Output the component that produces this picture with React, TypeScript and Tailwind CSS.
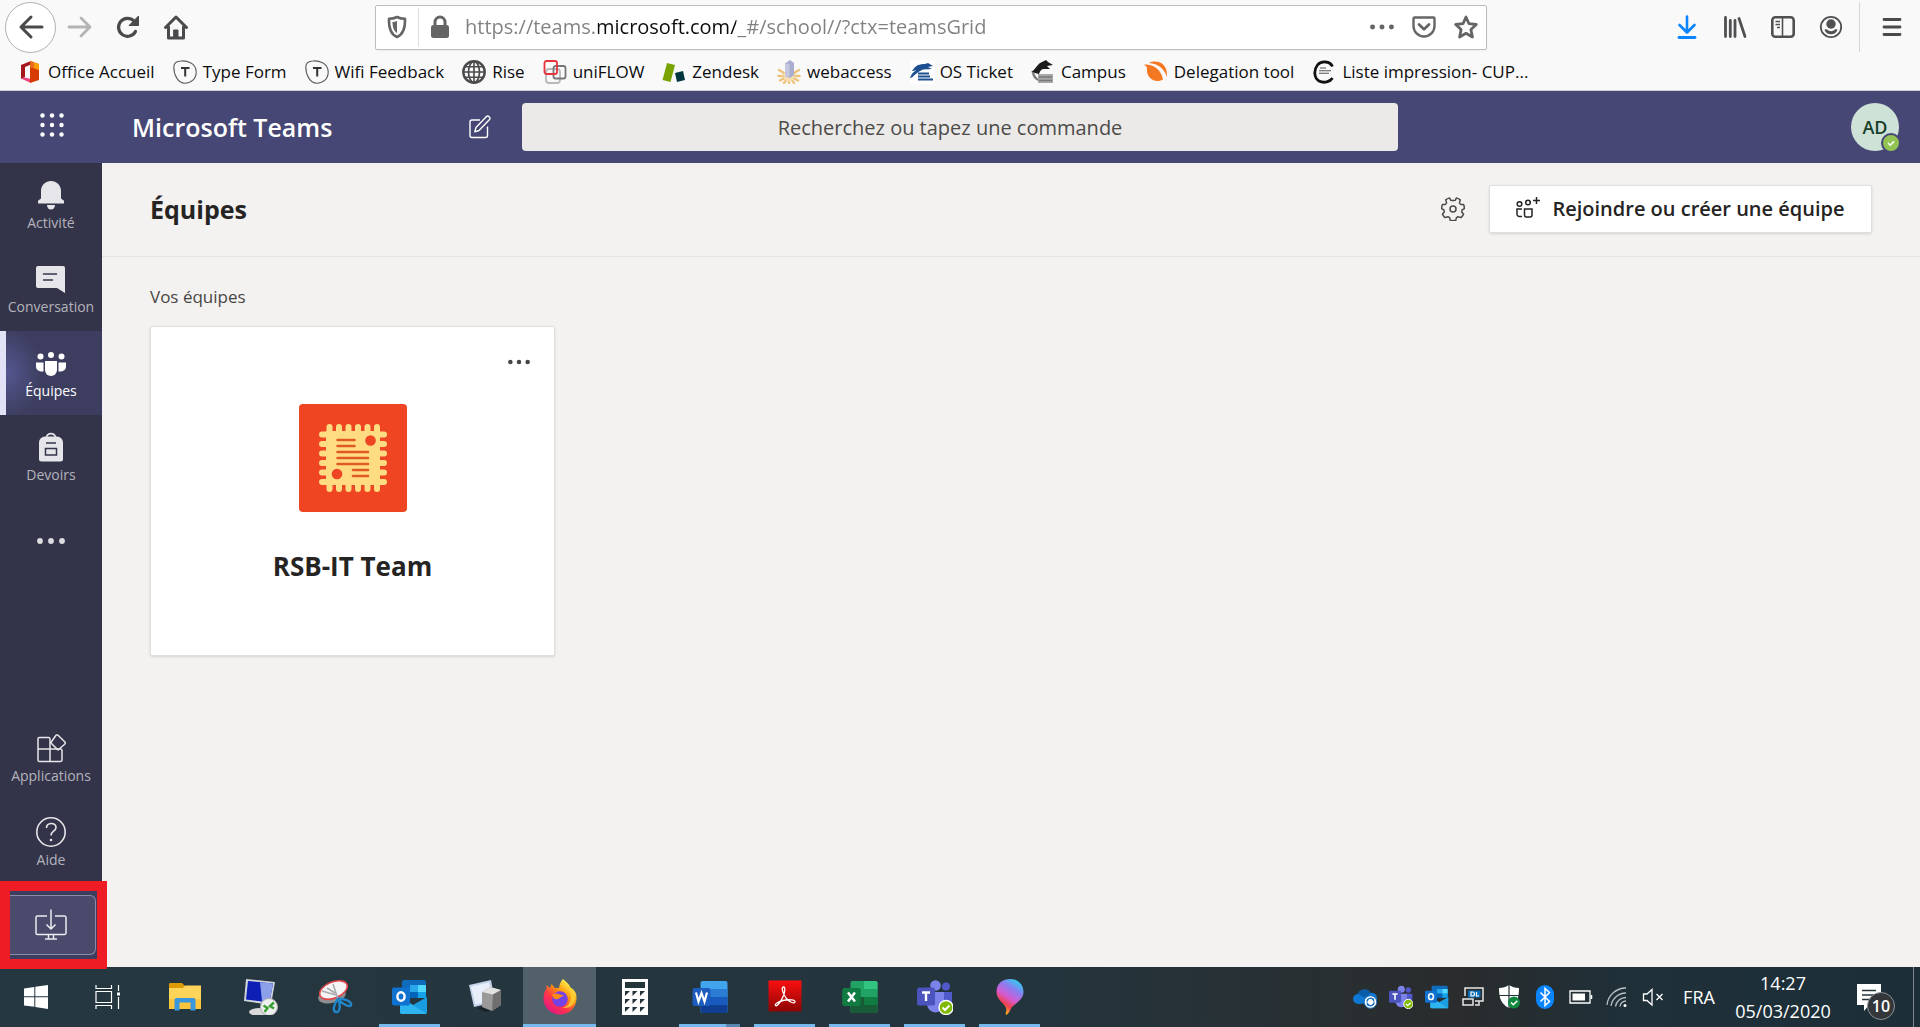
import React from 'react';

interface Bookmark {
  label: string;
  icon: React.ReactNode;
}

interface RailItemProps {
  label: string;
  icon: React.ReactNode;
  active?: boolean;
}

interface TaskbarApp {
  name: string;
  icon: React.ReactNode;
  state?: 'open' | 'active' | 'stacked';
}

/* ---------- browser icons ---------- */

const BackIcon = () => (
  <svg className="size-7" viewBox="0 0 28 28" fill="none" stroke="#4a4a4c" strokeWidth="3" strokeLinecap="round" strokeLinejoin="round">
    <path d="M25 14H4M14 4 4 14l10 10" />
  </svg>
);

const ForwardIcon = () => (
  <svg className="size-7" viewBox="0 0 28 28" fill="none" stroke="#b4b4b5" strokeWidth="2.8" strokeLinecap="round" strokeLinejoin="round">
    <path d="M3 14h21M15 5l9 9-9 9" />
  </svg>
);

const ReloadIcon = () => (
  <svg className="size-7" viewBox="0 0 28 28" fill="none">
    <path d="M21.5 18.5A9 9 0 1 1 20 8" stroke="#4a4a4c" strokeWidth="3.2" strokeLinecap="round" />
    <path d="M24.5 3v9.5H15z" fill="#4a4a4c" stroke="#4a4a4c" strokeWidth="1" strokeLinejoin="round" />
  </svg>
);

const HomeIcon = () => (
  <svg className="size-7" viewBox="0 0 28 28" fill="none" stroke="#4a4a4c" strokeWidth="3" strokeLinecap="round" strokeLinejoin="round">
    <path d="M3.500 14.500 14 4l10.500 10.500" />
    <path d="M6.500 14v11h15V14" />
    <path d="M12 17h4v7h-4z" fill="#4a4a4c" strokeWidth="1" />
  </svg>
);

const ShieldIcon = () => (
  <svg className="h-6 w-5" viewBox="0 0 20 24" fill="none">
    <path d="M10 2c3 1.500 5.500 1.700 8 1.700C18.300 12 17 19 10 22 3 19 1.700 12 2 3.700 4.500 3.700 7 3.500 10 2z" stroke="#656566" strokeWidth="2.600" strokeLinejoin="round" />
    <path d="M10 6v12c-3.500-2.500-4.400-6-4.500-11 1.500 0 3-.300 4.500-1z" fill="#656566" />
  </svg>
);

const LockIcon = () => (
  <svg className="h-6 w-5" viewBox="0 0 20 24" fill="none">
    <path d="M5 11V7a5 5 0 0 1 10 0v4" stroke="#656566" strokeWidth="3" />
    <rect x="1" y="10" width="18" height="13" rx="2.500" fill="#656566" />
  </svg>
);

const PocketIcon = () => (
  <svg className="size-6" viewBox="0 0 24 24" fill="none" stroke="#656566" strokeLinecap="round" strokeLinejoin="round">
    <path d="M2.500 2.500h19a1 1 0 0 1 1 1V11a10.500 10.500 0 0 1-21 0V3.500a1 1 0 0 1 1-1z" strokeWidth="2.400" />
    <path d="m7 9.500 5 4.800 5-4.800" strokeWidth="2.800" />
  </svg>
);

const StarIcon = () => (
  <svg className="size-6" viewBox="0 0 24 24" fill="none" stroke="#656566" strokeWidth="2.800" strokeLinejoin="round">
    <path d="m12 2 3 6.700 7.300.800-5.400 5 1.500 7.500L12 18.300 5.600 22l1.500-7.500-5.400-5L9 8.700z" />
  </svg>
);

const DownloadIcon = () => (
  <svg className="size-6" viewBox="0 0 24 24" fill="none" stroke="#0a84ff" strokeLinecap="round" strokeLinejoin="round">
    <path d="M12 1.500V17M4.500 10l7.500 7.500 7.500-7.500" strokeWidth="2.600" />
    <path d="M4 22.500h16" strokeWidth="2.800" />
  </svg>
);

const LibraryIcon = () => (
  <svg className="size-6" viewBox="0 0 24 24" fill="none" stroke="#505052" strokeWidth="2.800" strokeLinecap="round">
    <path d="M2.500 2.500v19M7.300 5.500v16M12 5.500v16M16 3.500l6 18" />
  </svg>
);

const SidebarIcon = () => (
  <svg className="size-6" viewBox="0 0 24 24" fill="none" stroke="#505052">
    <rect x="1.300" y="2.300" width="21.400" height="19.400" rx="3" strokeWidth="2.600" />
    <path d="M11.500 3v18" strokeWidth="1.600" />
    <path d="M4.500 6.500h4.500M4.500 9.500h4.500M6 12.500h3" strokeWidth="1.500" />
  </svg>
);

const AccountIcon = () => (
  <svg className="size-6" viewBox="0 0 24 24" fill="none">
    <circle cx="12" cy="12" r="10.200" stroke="#505052" strokeWidth="1.800" />
    <circle cx="12" cy="9" r="4.700" fill="#505052" />
    <path d="M5.500 14.800c1.500-.900 2.500-.400 3.500.500 2 1.200 4 1.200 6 0 1-.900 2-1.400 3.500-.500C17.500 18 15 19.300 12 19.300S6.500 18 5.500 14.800z" fill="#505052" />
  </svg>
);

const MenuIcon = () => (
  <svg className="size-6" viewBox="0 0 24 24" stroke="#4a4a4c" strokeWidth="2.800" strokeLinecap="round">
    <path d="M4 4.500h16M4 12h16M4 19.500h16" />
  </svg>
);

/* ---------- bookmark icons ---------- */

const OfficeIcon = () => (
  <svg className="size-6" viewBox="0 0 24 24">
    <path d="M13 1 3 5v14l4-2V7l6-2.500z" fill="#a4161a" />
    <path d="m3 18.500 10 4.500v-4l-6-1.500z" fill="#f0417c" />
    <path d="M12 1l9 3v16l-9 3z" fill="#d83b01" />
    <path d="M12 1l9 3v6l-9-3z" fill="#f9a000" />
    <path d="M12 1v6l4 1V2.300z" fill="#e86a1c" />
  </svg>
);

const TypeformIcon = () => (
  <svg className="size-6" viewBox="0 0 24 24" fill="none">
    <path d="M8 1c5-.500 15.200 1.500 15.200 11 0 7-5 11.200-11.200 11.200C5 23.200.800 15 .800 7 .800 2.500 4 1.200 8 1z" stroke="#5c5c5c" strokeWidth="1.100" />
    <path d="M8 8h8.500M12.200 8v8.500" stroke="#333" strokeWidth="2" />
  </svg>
);

const GlobeIcon = () => (
  <svg className="size-6" viewBox="0 0 24 24" fill="none" stroke="#4a4a4c">
    <circle cx="12" cy="12" r="10.700" strokeWidth="2.400" />
    <ellipse cx="12" cy="12" rx="5.500" ry="10.500" strokeWidth="1.700" />
    <path d="M12 1v22M1 12h22M3 6.700h18M3 17.300h18" strokeWidth="1.600" />
  </svg>
);

const UniflowIcon = () => (
  <svg className="size-6" viewBox="0 0 24 24" fill="none" strokeWidth="1.800">
    <rect x="3" y="9" width="14" height="14" rx="3" stroke="#b9b9b9" />
    <rect x="10.500" y="6" width="12" height="12.500" rx="2" stroke="#77777a" />
    <rect x="1.500" y="1" width="12.500" height="13" rx="2" stroke="#e8323c" />
  </svg>
);

const ZendeskIcon = () => (
  <svg className="size-6" viewBox="0 0 24 24">
    <path d="m5 3 8 2-4.500 17-8-2z" fill="#78a300" />
    <path d="m13 13 8-2 2 9-8 2z" fill="#03363d" />
  </svg>
);

const WebaccessIcon = () => (
  <svg className="size-6" viewBox="0 0 24 24">
    <g stroke="#edc27a" strokeWidth="2.400" strokeLinecap="round">
      <path d="M12 16 2 10M12 16H1.500M12 16 3 20.500M12 16l-5 7M12 16v7M12 16l5 7M12 16l9 4.500M12 16h10.500M12 16l10-6" />
    </g>
    <circle cx="12" cy="16" r="5.500" fill="#f6deb0" />
    <path d="M8 3.500 13 0l4 3v12l-4 3-5-2z" fill="#a9aed0" />
    <path d="M8 3.500 12.500 4v13L8 16z" fill="#c3c7df" />
  </svg>
);

const OsTicketIcon = () => (
  <svg className="size-6" viewBox="0 0 24 24">
    <path fill="#fff" d="M0 0h24v24H0z" />
    <path d="M0 18c2-6 6-8 9-8L2 11c3-5 9-7 13-7l3-1 5 3-5 1 4 2-9 .500C8 12 5 14 2 17.500z" fill="#1d4f91" />
    <path d="m4 8 4-3 6-1-5 3z" fill="#1d4f91" />
    <path d="M8 13.500h11M8 16.500h12M8 19.500h15" stroke="#1d4f91" strokeWidth="2" />
  </svg>
);

const CampusIcon = () => (
  <svg className="size-6" viewBox="0 0 24 24">
    <path d="M0 12c4-2 5-6 9-9l6-3 2 2 5 3-6 1 3 3-6 0c-3 0-4 2-5 5z" fill="#1c1c1c" />
    <path d="M3 12c1 5 5 8 8 9l-4 0c-4-2-6-5-6-9z" fill="#777" />
    <rect x="7" y="14" width="15" height="9" fill="#a8a8a8" />
    <path d="M8 17h13M8 20.500h13" stroke="#777" strokeWidth="1.500" />
  </svg>
);

const DelegationIcon = () => (
  <svg className="size-6" viewBox="0 0 24 24">
    <path d="M0 4.500C9 4 17 9 19 19.500 12 23.500 3 19 3 10.500L2.800 7z" fill="#f47721" />
    <path d="M5 3C13-1 24 3 23 17 20 8 14 4 5 3z" fill="#f47721" />
  </svg>
);

const ListeIcon = () => (
  <svg className="size-6" viewBox="0 0 24 24" fill="none">
    <path d="M20.500 6.500C18 1 9 .500 5.500 5 1.500 10 2 18 7 21c5 2.500 11 1 13.500-3" stroke="#111" strokeWidth="2.800" />
    <path d="M8 8h6M7 10.700h12M7 13.300h10" stroke="#555" strokeWidth="1.100" />
  </svg>
);

const bookmarks: Bookmark[] = [
  { label: 'Office Accueil', icon: <OfficeIcon /> },
  { label: 'Type Form', icon: <TypeformIcon /> },
  { label: 'Wifi Feedback', icon: <TypeformIcon /> },
  { label: 'Rise', icon: <GlobeIcon /> },
  { label: 'uniFLOW', icon: <UniflowIcon /> },
  { label: 'Zendesk', icon: <ZendeskIcon /> },
  { label: 'webaccess', icon: <WebaccessIcon /> },
  { label: 'OS Ticket', icon: <OsTicketIcon /> },
  { label: 'Campus', icon: <CampusIcon /> },
  { label: 'Delegation tool', icon: <DelegationIcon /> },
  { label: 'Liste impression- CUP...', icon: <ListeIcon /> },
];

/* ---------- Teams icons ---------- */

const BellIcon = () => (
  <svg className="size-8" viewBox="0 0 32 32" fill="currentColor">
    <path d="M16 2c5.500 0 10 4.300 10 9.800v7.700l3 2.300v2.700H3v-2.700l3-2.300v-7.700C6 6.300 10.500 2 16 2z" />
    <path d="M12 26h8a4 4.500 0 0 1-8 0z" />
  </svg>
);

const ChatIcon = () => (
  <svg className="size-8" viewBox="0 0 32 32">
    <path d="M3 3h25a2 2 0 0 1 2 2v25l-8-5H3a2 2 0 0 1-2-2V5a2 2 0 0 1 2-2z" fill="currentColor" />
    <path d="M8.500 11h13M8.500 17h9" stroke="#33344a" strokeWidth="1.500" strokeLinecap="round" />
  </svg>
);

const TeamsIcon = () => (
  <svg className="size-8" viewBox="0 0 32 32" fill="currentColor">
    <circle cx="5.500" cy="9.500" r="3" />
    <circle cx="16" cy="8" r="3" />
    <circle cx="26.500" cy="9.500" r="3" />
    <path d="M10 14h12v9a6 6 0 0 1-12 0z" />
    <path d="M1 15.500h7.500v9H6a5 5 0 0 1-5-5zM31 15.500h-7.500v9H26a5 5 0 0 0 5-5z" />
  </svg>
);

const BackpackIcon = () => (
  <svg className="size-8" viewBox="0 0 32 32">
    <path d="M11.500 6a4.700 4.700 0 0 1 9 0" fill="none" stroke="currentColor" strokeWidth="1.600" />
    <path d="M10 5.500h12a6 6 0 0 1 6 6V28a2.500 2.500 0 0 1-2.500 2.500h-19A2.500 2.500 0 0 1 4 28V11.500a6 6 0 0 1 6-6z" fill="currentColor" />
    <path d="M11 12h10" stroke="#33344a" strokeWidth="1.500" />
    <path d="M10.500 17.500h11v6.500h-11z" fill="none" stroke="#33344a" strokeWidth="1.500" />
  </svg>
);

const AppsIcon = () => (
  <svg className="size-8" viewBox="0 0 32 32" fill="none" stroke="currentColor" strokeWidth="1.500" strokeLinejoin="round">
    <path d="M15 17V7a1.500 1.500 0 0 0-1.500-1.500h-9A1.500 1.500 0 0 0 3 7v21a1.500 1.500 0 0 0 1.500 1.500h21A1.500 1.500 0 0 0 27 28v-9.500a1.500 1.500 0 0 0-1.500-1.500zH3M15 17v12.500" />
    <path d="m21.200 3 1.600 0 7.400 7.200v1.600L23 18l-7.300-7.200z" />
  </svg>
);

const HelpIcon = () => (
  <svg className="size-8" viewBox="0 0 32 32" fill="none" stroke="currentColor" strokeWidth="1.600">
    <circle cx="16" cy="16" r="14.200" />
    <path d="M11.500 12c0-6 9.500-6 9.500-.500 0 4-5 3.500-5 8" />
    <circle cx="16" cy="24" r="1.300" fill="currentColor" stroke="none" />
  </svg>
);

const InstallIcon = () => (
  <svg className="size-8" viewBox="0 0 32 32" fill="none" stroke="currentColor" strokeWidth="1.500" strokeLinejoin="round">
    <path d="M12 7H2.500A1.500 1.500 0 0 0 1 8.500V24a1.500 1.500 0 0 0 1.500 1.500h27A1.500 1.500 0 0 0 31 24V8.500A1.500 1.500 0 0 0 29.500 7H20" />
    <path d="M16 .500V20M11.500 15.500 16 20l4.500-4.500M13.500 25.500v4.500M18.500 25.500v4.500M10 30h12" />
  </svg>
);

const ComposeIcon = () => (
  <svg className="size-6" viewBox="0 0 24 24" fill="none" stroke="#fff" strokeWidth="1.400" strokeLinejoin="round">
    <path d="M12 5H4a2 2 0 0 0-2 2v13.500a2 2 0 0 0 2 2h13.500a2 2 0 0 0 2-2v-9" />
    <path d="m8 12.500 10.500-11c1.500-1.400 4.500 1 3 3L11 15.500l-4.200 1.300z" />
  </svg>
);

const GearIcon = () => (
  <svg className="size-6" viewBox="0 0 24 24" fill="none" stroke="#4d4b49" strokeWidth="1.500" strokeLinejoin="round">
    <path d="M9.700 3.200 8.500.900a11.500 11.500 0 0 0-3.800 2l.900 3-1.200 1.500-3 .100A11.500 11.500 0 0 0 .600 11.700L3 13l.300 2-1.900 2.200a11.500 11.500 0 0 0 2.600 3.400l2.900-.900 1.700 1 .600 2.600a11.500 11.500 0 0 0 5.600 0l.600-2.600 1.700-1 2.900.900a11.500 11.500 0 0 0 2.600-3.400L20.700 15l.300-2 2.400-1.300a11.500 11.500 0 0 0-.800-4.200l-3-.100-1.200-1.500.900-3a11.500 11.500 0 0 0-3.800-2l-1.200 2.300a9 9 0 0 1-4.600 0z" />
    <circle cx="12" cy="12" r="3" />
  </svg>
);

const JoinIcon = () => (
  <svg className="h-7 w-6" viewBox="0 0 24 28" fill="none" stroke="#252423" strokeWidth="1.500">
    <circle cx="3.500" cy="9" r="2.300" />
    <circle cx="12" cy="7.500" r="2.300" />
    <path d="M6 14H1v5a2.500 2.500 0 0 0 2.500 2.500H6M8.500 14h7.500v6a2 2 0 0 1-2 2h-3.500a2 2 0 0 1-2-2zM20.500 2v7M17 5.500h7" />
  </svg>
);

const TeamPicture = () => {
  const teeth = [29, 38.500, 48, 57.500, 67, 76.500];
  return (
    <svg className="size-[108px] rounded" viewBox="0 0 108 108" role="img" aria-label="RSB-IT Team">
      <rect width="108" height="108" fill="#ef4523" />
      <g fill="#ffdc82">
        <rect x="27" y="27" width="54" height="54" />
        {teeth.map(t => (
          <React.Fragment key={t}>
            <rect x={t - 1.500} y="20" width="6" height="68" rx="3" />
            <rect x="20" y={t - 1.500} width="68" height="6" rx="3" />
          </React.Fragment>
        ))}
      </g>
      <g stroke="#df5a25" strokeWidth="2.600" strokeLinecap="round">
        <path d="M38.500 36h17M38.500 42h17M38.500 48H69M38.500 54H69M38.500 60H69M54 66h15M54 72h15" />
      </g>
      <circle cx="71.500" cy="36.500" r="5.300" fill="#ef4523" />
      <circle cx="38" cy="70" r="5.300" fill="#ef4523" />
    </svg>
  );
};

const Dots = ({ className }: { className: string }) => (
  <svg className={className} viewBox="0 0 28 8" fill="currentColor">
    <circle cx="3" cy="4" r="2.900" />
    <circle cx="14" cy="4" r="2.900" />
    <circle cx="25" cy="4" r="2.900" />
  </svg>
);

/* ---------- taskbar icons ---------- */

const WindowsIcon = () => (
  <svg className="size-6" viewBox="0 0 24 24" fill="#fff">
    <path d="M0 3.400 10.300 2v9.300H0zM11.300 1.800 24 0v11.300H11.300zM0 12.300h10.300v9.500L0 20.400zM11.300 12.300H24V24l-12.700-1.900z" />
  </svg>
);

const TaskViewIcon = () => (
  <svg className="h-6 w-7" viewBox="0 0 28 24" fill="none" stroke="#fff" strokeWidth="1.200">
    <path d="M2 0v3.500h15.500V0M2 24v-3.500h15.500V24M2 6.500h15.500v11H2zM24.500 0v6M24.500 12v12" />
    <path d="M23 7.500h3v3h-3z" fill="#fff" stroke="none" />
  </svg>
);

const ExplorerIcon = () => (
  <svg className="size-9" viewBox="0 0 36 36">
    <path d="M2 5a1 1 0 0 1 1-1h12l3 3v5H2z" fill="#dd9a05" />
    <path d="M2 9h14l2-2.500h16V30H2z" fill="#ffd45a" />
    <path d="M2 20h32v10H2z" fill="#fbc63c" />
    <path d="M7.500 31.500V21a2 2 0 0 1 2-2h17a2 2 0 0 1 2 2v10.500h-5v-8h-11v8z" fill="#3a96dd" />
  </svg>
);

const RemoteIcon = () => (
  <svg className="size-9" viewBox="0 0 36 36">
    <path d="M4 0l29 3-4 23-27-4z" fill="#cfd3da" />
    <path d="M6 2l25 2.500-3.500 19L4 20.500z" fill="#0d1fb5" />
    <path d="M18 3.200 31 4.500l-3.500 19L20 22.600z" fill="#8ba0e8" />
    <ellipse cx="17" cy="33" rx="10" ry="4" fill="#d8d8d8" />
    <circle cx="27" cy="28" r="8.500" fill="#eee" stroke="#aaa" strokeWidth="1" />
    <path d="m21.500 26.500 4 2.500-3 4M32 23.500l-4 3.500 4 2.500" fill="none" stroke="#37a032" strokeWidth="2.400" />
  </svg>
);

const SnippingIcon = () => (
  <svg className="size-9" viewBox="0 0 36 36" fill="none">
    <ellipse cx="15" cy="17" rx="14" ry="7" transform="rotate(-12 15 17)" fill="#8e8e90" />
    <ellipse cx="16.500" cy="11" rx="14.500" ry="8" transform="rotate(-22 16.500 11)" fill="#f5f5f5" stroke="#e04548" strokeWidth="1.600" />
    <path d="m5 12 14 4M16 5l5 15M10 9l8 5" stroke="#aaa" strokeWidth="1.500" />
    <path d="M21 20c-4 5-6 12-2 13s5-7 2-13c7-1 14 3 13 6s-9-1-13-6z" stroke="#2186c9" strokeWidth="2.400" />
  </svg>
);

const OutlookIcon = ({ className = 'size-9' }: { className?: string }) => (
  <svg className={className} viewBox="0 0 36 36">
    <path d="M10 3a2 2 0 0 1 2-2h20a2 2 0 0 1 2 2v16H10z" fill="#0f6cbd" />
    <path d="M18 6h8v7h-8z" fill="#28a8ea" />
    <path d="M26 6h8v7h-8z" fill="#50d9ff" />
    <path d="M18 13h8v6h-8z" fill="#0364b8" />
    <path d="M26 13h8v6h-8z" fill="#14a3e8" />
    <path d="m8 18 13 8 14-8v15a2 2 0 0 1-2 2H10a2 2 0 0 1-2-2z" fill="#1b9de2" />
    <path d="m8 18 27 17H10a2 2 0 0 1-2-2z" fill="#2eb4f0" />
    <rect x="0" y="8.500" width="18" height="18" rx="2" fill="#0f72cf" />
    <ellipse cx="9" cy="17.500" rx="3.600" ry="4.300" fill="none" stroke="#fff" strokeWidth="2.400" />
  </svg>
);

const InstallerIcon = () => (
  <svg className="size-9" viewBox="0 0 36 36">
    <path d="M10 29l16-3 4 4-12 3z" fill="#17242b" />
    <path d="m2 6 22-5 4 22-21 5z" fill="#c5d2ea" />
    <path d="m4 7.500 18-4 3.500 18-17 4z" fill="#e9effa" />
    <path d="m15 13 8-5 11 3v15l-9 6-10-4z" fill="#9a9a9a" />
    <path d="m15 13 8-5 11 3-8 4.500z" fill="#e2e2e2" />
    <path d="m26 15.500 8-4.500v15l-9 6z" fill="#6f6f6f" />
  </svg>
);

const FirefoxIcon = () => (
  <svg className="size-9" viewBox="0 0 36 36">
    <defs>
      <linearGradient id="ff" x1="0.850" y1="0.100" x2="0.200" y2="0.950">
        <stop offset="0.050" stopColor="#fff44f" />
        <stop offset="0.350" stopColor="#ff980e" />
        <stop offset="0.650" stopColor="#ff3647" />
        <stop offset="1" stopColor="#e31587" />
      </linearGradient>
    </defs>
    <path d="M21 0c3 3 6 5 7.500 8.500C33 11 35 15 34.500 20 34 29 27 35.500 18 35.500S1.500 28.500 1.500 19.500c0-4 1-7.500 3-10V6l3.500 3 1.500-4 3.500 4h4c.500-4 2-7 4-9z" fill="url(#ff)" />
    <circle cx="18" cy="20" r="7.800" fill="#7542e5" />
    <path d="M10 16c2-2 5-2 8-.500l4 1-4 2c-1 2-4 2-6 1z" fill="#ff8a16" />
    <path d="M21 1c0 6 8 8 8 17 0 6-4 10-9 11 9 1 14-5 13-12C32 10 23 8 21 1z" fill="#ffcf35" opacity=".85" />
  </svg>
);

const CalculatorIcon = () => (
  <svg className="size-9" viewBox="0 0 36 36">
    <path d="M5 0h26v36H5z" fill="#fff" />
    <path d="M8 3h20v6H8z" fill="#24343b" />
    {[12, 20, 28].map(y =>
      [8, 15.500, 23].map(x => <path key={`${x}-${y}`} d={`M${x} ${y}h5l-5 5z`} fill="#24343b" />),
    )}
  </svg>
);

const DocumentTile = ({ tones, tile, children }: { tones: string[]; tile: string; children: React.ReactNode }) => (
  <svg className="size-9" viewBox="0 0 36 36">
    <rect x="8.500" y="2" width="27" height="32" rx="2" fill={tones[0]} />
    <path d="M8.500 10h27v8h-27z" fill={tones[1]} />
    <path d="M8.500 18h27v8h-27z" fill={tones[2]} />
    <path d="M8.500 26h27v6a2 2 0 0 1-2 2h-23a2 2 0 0 1-2-2z" fill={tones[3]} />
    <rect x="0.500" y="9" width="18" height="18" rx="2" fill={tile} />
    {children}
  </svg>
);

const WordIcon = () => (
  <DocumentTile tones={['#41a5ee', '#2b7cd3', '#185abd', '#103f91']} tile="#1b5cbe">
    <path d="m4 13.500 2.500 9 3-8.500 3 8.500 2.500-9" fill="none" stroke="#fff" strokeWidth="2.200" />
  </DocumentTile>
);

const ExcelIcon = () => (
  <DocumentTile tones={['#21a366', '#21a366', '#107c41', '#185c37']} tile="#107c41">
    <path d="M22 2h11.500a2 2 0 0 1 2 2v6H22z" fill="#33c481" />
    <path d="M8.500 18H22v8H8.500z" fill="#185c37" />
    <rect x="0.500" y="9" width="18" height="18" rx="2" fill="#107c41" />
    <path d="m6 13.500 7 9M13 13.500l-7 9" stroke="#fff" strokeWidth="2.500" />
  </DocumentTile>
);

const AcrobatIcon = () => (
  <svg className="size-9" viewBox="0 0 36 36">
    <defs>
      <linearGradient id="pdf" x1="0" y1="0" x2="0" y2="1">
        <stop stopColor="#fb0f0f" />
        <stop offset="1" stopColor="#8d0505" />
      </linearGradient>
    </defs>
    <rect x="1.500" y="1.500" width="33" height="31" fill="url(#pdf)" />
    <path d="M16.500 8c-2.500 0-1 6 2.500 11 3 4 8 6 9 4s-6-3-12-1.500-8.500 4-7.500 5c2 1.500 6-5 8-10 1.500-4 2-8.500 0-8.500z" fill="none" stroke="#fff" strokeWidth="1.300" />
  </svg>
);

const TeamsLogo = ({ className = 'size-9' }: { className?: string }) => (
  <svg className={className} viewBox="0 0 36 36">
    <circle cx="29" cy="7.500" r="4" fill="#5059c9" />
    <circle cx="18.500" cy="6.500" r="5.300" fill="#7b83eb" />
    <path d="M24 13h11v10a6 6 0 0 1-11 2z" fill="#5059c9" />
    <path d="M10 13h17v12a8.500 8.500 0 0 1-17 0z" fill="#7b83eb" />
    <rect x="0" y="8.500" width="18" height="18" rx="2" fill="#4b53bc" />
    <path d="M5 13.500h8M9 13.500V22" stroke="#fff" strokeWidth="2.400" />
    <circle cx="29" cy="28.500" r="7" fill="#7fba00" stroke="#fff" strokeWidth="1.400" />
    <path d="m25.500 28.500 2.500 2.500 4.500-4.500" fill="none" stroke="#fff" strokeWidth="2" />
  </svg>
);

const Paint3dIcon = () => (
  <svg className="size-9" viewBox="0 0 36 36">
    <defs>
      <linearGradient id="p3d" x1="0.800" y1="0" x2="0.300" y2="1">
        <stop stopColor="#25d8f2" />
        <stop offset="0.300" stopColor="#8b7df0" />
        <stop offset="0.550" stopColor="#d65ad0" />
        <stop offset="0.750" stopColor="#f0424f" />
        <stop offset="0.950" stopColor="#f5b021" />
      </linearGradient>
    </defs>
    <path d="M18 0c8 0 13.500 5.500 13.500 13S24 24 20 28c-2 2.500-2 6-6 8-1-2 1-4 0-7-1.500-5-9.500-8-9.500-16S10 0 18 0z" fill="url(#p3d)" />
  </svg>
);

const taskbarApps: TaskbarApp[] = [
  { name: 'Explorateur de fichiers', icon: <ExplorerIcon /> },
  { name: 'Bureau à distance', icon: <RemoteIcon /> },
  { name: 'Outil Capture', icon: <SnippingIcon /> },
  { name: 'Outlook', icon: <OutlookIcon />, state: 'open' },
  { name: 'Installation', icon: <InstallerIcon /> },
  { name: 'Firefox', icon: <FirefoxIcon />, state: 'active' },
  { name: 'Calculatrice', icon: <CalculatorIcon /> },
  { name: 'Word', icon: <WordIcon />, state: 'stacked' },
  { name: 'Acrobat', icon: <AcrobatIcon />, state: 'open' },
  { name: 'Excel', icon: <ExcelIcon />, state: 'open' },
  { name: 'Teams', icon: <TeamsLogo />, state: 'open' },
  { name: 'Paint 3D', icon: <Paint3dIcon />, state: 'open' },
];

const trayIcons: { name: string; icon: React.ReactNode }[] = [
  {
    name: 'OneDrive',
    icon: (
      <svg className="size-6" viewBox="0 0 24 24">
        <path d="M5 19a5 5 0 0 1 0-10A7 7 0 0 1 17.500 8 5 5 0 0 1 20 18z" fill="#0f78d4" />
        <path d="M5 9a7 7 0 0 1 12.500-1L12 13z" fill="#0a5ba8" />
        <circle cx="17.500" cy="17" r="6.300" fill="#fff" stroke="#1b6fc0" strokeWidth="1" />
        <path d="M14 16.500a3.500 3.500 0 0 1 6.500-1.500v-1.500M21 17.500a3.500 3.500 0 0 1-6.500 1.500v1.500" fill="none" stroke="#1b6fc0" strokeWidth="1.500" />
      </svg>
    ),
  },
  { name: 'Teams', icon: <TeamsLogo className="size-6" /> },
  { name: 'Outlook', icon: <OutlookIcon className="size-6" /> },
  {
    name: 'DisplayLink',
    icon: (
      <svg className="size-6" viewBox="0 0 24 24" fill="none" stroke="#e6e6e6" strokeWidth="1.500">
        <path d="M4 11V3h18v13h-8M18 16v4h-4" />
        <path d="M2 14h10v6H2z" />
        <path d="M7 5.500h12.500v7H7z" fill="#0a6db5" stroke="none" />
        <path d="M10 7v4h1.500a2 2 0 0 0 0-4zM15.500 7v4h2.500" stroke="#fff" strokeWidth="1.200" />
      </svg>
    ),
  },
  {
    name: 'Sécurité Windows',
    icon: (
      <svg className="size-6" viewBox="0 0 24 24">
        <path d="M12 0c3 2 6 3 10 3 0 10-2 16-10 20C4 19 2 13 2 3c4 0 7-1 10-3z" fill="#fff" />
        <path d="M12 0v23M2 10.500h20" stroke="#24343b" strokeWidth="1.200" />
        <circle cx="17" cy="17.500" r="6" fill="#10893e" />
        <path d="m14 17.500 2.300 2.300 4-4" fill="none" stroke="#fff" strokeWidth="1.500" />
      </svg>
    ),
  },
  {
    name: 'Bluetooth',
    icon: (
      <svg className="size-6" viewBox="0 0 24 24">
        <rect x="3" y="0" width="18" height="24" rx="9" fill="#0a84ff" />
        <path d="m7.500 7.500 9 9L12 20.500v-17l4.500 4-9 9" fill="none" stroke="#fff" strokeWidth="1.500" />
      </svg>
    ),
  },
  {
    name: 'Batterie',
    icon: (
      <svg className="size-6" viewBox="0 0 24 24">
        <path d="M1 6h20v12H1z" fill="none" stroke="#fff" strokeWidth="1.300" />
        <path d="M3.500 8.500H16v7H3.500z" fill="#fff" />
        <path d="M22.500 10v4" stroke="#fff" strokeWidth="1.500" />
      </svg>
    ),
  },
  {
    name: 'Wi-Fi',
    icon: (
      <svg className="size-6" viewBox="0 0 24 24" fill="none" stroke="#b9c0c4" strokeWidth="1.300">
        <path d="M2 20A19 19 0 0 1 21 3M6 21A15 15 0 0 1 21 8M10.500 21.500A10.500 10.500 0 0 1 21 12.500M15 21.500a6 6 0 0 1 6-5.500" />
        <circle cx="20" cy="20.500" r="1.500" fill="#fff" stroke="none" />
      </svg>
    ),
  },
  {
    name: 'Son coupé',
    icon: (
      <svg className="size-6" viewBox="0 0 24 24" fill="none" stroke="#fff" strokeWidth="1.300">
        <path d="M2.500 9v6.500H6l5 4.500V4.500L6 9zM15.500 9l6 6M21.500 9l-6 6" />
      </svg>
    ),
  },
];

/* ---------- sections ---------- */

const BrowserChrome = () => (
  <div className="border-b border-[#cfcfcf] bg-[#f9f9fa]">
    <div className="flex h-[54px] items-center">
      <div className="flex w-[375px] shrink-0 items-center gap-5 pl-[5px]">
        <button aria-label="Précédent" className="grid size-[51px] place-items-center rounded-full border border-[#b1b1b3] bg-white">
          <BackIcon />
        </button>
        <button aria-label="Suivant" className="-ml-2.5"><ForwardIcon /></button>
        <button aria-label="Actualiser"><ReloadIcon /></button>
        <button aria-label="Accueil"><HomeIcon /></button>
      </div>
      <div className="flex h-[45px] flex-1 items-center rounded-xs border border-[#bdbdbf] bg-white pr-2 shadow-xs">
        <span className="flex w-[42px] justify-center"><ShieldIcon /></span>
        <span className="h-[39px] w-px bg-[#dededf]" />
        <span className="flex w-[42px] justify-center"><LockIcon /></span>
        <input
          aria-label="Adresse"
          defaultValue="https://teams.microsoft.com/_#/school//?ctx=teamsGrid"
          className="ml-1 min-w-0 flex-1 bg-[linear-gradient(90deg,#808080_133px,#0c0c0d_133px,#0c0c0d_271px,#808080_271px)] bg-clip-text text-xl text-[#808080] outline-none [-webkit-text-fill-color:transparent]"
        />
        <div className="flex items-center gap-[18px] text-[#656566]">
          <button aria-label="Actions de la page"><Dots className="h-2 w-6" /></button>
          <button aria-label="Pocket"><PocketIcon /></button>
          <button aria-label="Marquer cette page"><StarIcon /></button>
        </div>
      </div>
      <div className="flex w-[433px] shrink-0 items-center justify-end gap-6">
        <button aria-label="Téléchargements"><DownloadIcon /></button>
        <button aria-label="Bibliothèque"><LibraryIcon /></button>
        <button aria-label="Panneaux latéraux"><SidebarIcon /></button>
        <button aria-label="Compte"><AccountIcon /></button>
        <button aria-label="Menu" className="-ml-2 flex h-[50px] w-[61px] items-center border-l border-[#d7d7db] pl-5"><MenuIcon /></button>
      </div>
    </div>
    <nav aria-label="Marque-pages" className="flex h-9 items-center gap-[18px] pl-[18px]">
      {bookmarks.map(bookmark => (
        <a key={bookmark.label} href="#" className="flex items-center gap-1.5 text-[17px] leading-6 whitespace-nowrap text-[#0c0c0d]">
          {bookmark.icon}
          {bookmark.label}
        </a>
      ))}
    </nav>
  </div>
);

const TeamsHeader = () => (
  <header className="flex h-[72px] items-center bg-[#464775]">
    <div className="flex w-[522px] shrink-0 items-center">
      <button aria-label="Lanceur d'applications" className="ml-10 pb-1">
        <svg className="size-6" viewBox="0 0 24 24" fill="#fff">
          {[2.500, 12, 21.500].map(y => [2.500, 12, 21.500].map(x => <circle key={`${x}-${y}`} cx={x} cy={y} r="2.200" />))}
        </svg>
      </button>
      <h1 className="ml-[68px] flex-1 text-[25px] leading-8 font-semibold text-white">Microsoft Teams</h1>
      <button aria-label="Nouvelle conversation" className="mr-[30px]"><ComposeIcon /></button>
    </div>
    <input
      aria-label="Rechercher"
      placeholder="Recherchez ou tapez une commande"
      className="h-12 min-w-0 flex-1 rounded bg-[#ebeae8] pr-5 text-center text-xl text-[#4d4b49] outline-none placeholder:text-[#4d4b49]"
    />
    <div className="flex w-[522px] shrink-0 justify-end pr-[21px]">
      <button aria-label="Profil" className="relative grid size-12 place-items-center rounded-full bg-[#cfe2d7] text-lg font-semibold text-[#17402a]">
        AD
        <span className="absolute -right-0.5 -bottom-0.5 grid size-5 place-items-center rounded-full border-2 border-[#464775] bg-[#92c353]">
          <svg className="size-2.5" viewBox="0 0 10 10" fill="none" stroke="#fff" strokeWidth="1.500">
            <path d="m2 5 2.200 2.200L8 3.400" />
          </svg>
        </span>
      </button>
    </div>
  </header>
);

const RailItem: React.FC<RailItemProps> = ({ label, icon, active }) => (
  <button
    className={
      active
        ? 'flex h-[84px] flex-col items-center border-l-[6px] border-[#e2e2f6] bg-[#3d3e5f] bg-[radial-gradient(ellipse_36px_44px_at_left,#555691,#3d3e5f)] pt-4 pr-1.5 text-white'
        : 'flex h-[84px] flex-col items-center pt-4 text-[#e6e6ea]'
    }
  >
    {icon}
    <span className={active ? 'text-sm leading-6' : 'text-sm leading-6 text-[#b3b3bb]'}>{label}</span>
  </button>
);

const AppRail = () => (
  <nav aria-label="Teams" className="relative flex w-[102px] shrink-0 flex-col bg-[#33344a]">
    <RailItem label="Activité" icon={<BellIcon />} />
    <RailItem label="Conversation" icon={<ChatIcon />} />
    <RailItem label="Équipes" icon={<TeamsIcon />} active />
    <RailItem label="Devoirs" icon={<BackpackIcon />} />
    <button aria-label="Plus d'applications" className="flex h-[84px] items-center justify-center text-[#dcdce2]">
      <Dots className="h-2 w-7" />
    </button>
    <div className="mt-auto flex flex-col">
      <RailItem label="Applications" icon={<AppsIcon />} />
      <RailItem label="Aide" icon={<HelpIcon />} />
      <button aria-label="Télécharger l'application" className="relative z-10 -mt-[3px] -mb-0.5 h-[88px] w-[107px] border-[10px] border-[#ee1c24] bg-[#3d3e5f] py-1 pr-px">
        <span className="flex h-full items-center justify-center rounded-r-md border-y border-r border-[#8a8ba6] bg-[#4a4b6c] pr-1 text-[#ececf0]">
          <InstallIcon />
        </span>
      </button>
    </div>
  </nav>
);

const TeamsGrid = () => (
  <main className="flex-1 bg-[#f3f2f1]">
    <div className="flex h-[94px] items-center border-b border-[#e6e4e3] px-12 pb-0.5">
      <h2 className="flex-1 text-[25px] leading-8 font-bold text-[#252423]">Équipes</h2>
      <button aria-label="Gérer les équipes" className="mr-6"><GearIcon /></button>
      <button className="flex h-12 w-[383px] items-center justify-center gap-3 rounded-xs border border-[#e1dfdd] bg-white text-xl font-semibold text-[#252423] shadow">
        <JoinIcon />
        Rejoindre ou créer une équipe
      </button>
    </div>
    <section className="px-12 pt-7">
      <h3 className="text-[17px] leading-6 text-[#484644]">Vos équipes</h3>
      <article className="relative mt-[17px] flex h-[330px] w-[405px] flex-col items-center rounded-xs border border-[#e1dfdd] bg-white pt-[77px] shadow">
        <button aria-label="Plus d'options" className="absolute top-[31px] right-6 text-[#484644]">
          <Dots className="h-2 w-[22px]" />
        </button>
        <TeamPicture />
        <h4 className="mt-[38px] text-[26px] leading-8 font-bold text-[#252423]">RSB-IT Team</h4>
      </article>
    </section>
  </main>
);

const TaskbarButton = ({ app }: { app: TaskbarApp }) => (
  <button
    aria-label={app.name}
    className={app.state === 'active' ? 'flex w-[73px] flex-col items-center bg-[#52606a]' : 'flex w-[73px] flex-col items-center'}
  >
    <span className="flex flex-1 items-center pt-0.5">{app.icon}</span>
    {app.state === 'active' && <span className="h-[3px] w-full bg-[#76b9ed]" />}
    {app.state === 'open' && <span className="h-[3px] w-[61px] bg-[#76b9ed]" />}
    {app.state === 'stacked' && <span className="h-[3px] w-[61px] border-r-[14px] border-[#5988ae] bg-[#76b9ed]" />}
    {!app.state && <span className="h-[3px]" />}
  </button>
);

const Taskbar = () => (
  <footer className="flex h-[60px] bg-[linear-gradient(90deg,#253740,#24343c_55%,#2a2c2d_76%,#1f3039_85%,#1c2e38)] text-lg leading-7 text-white">
    <button aria-label="Démarrer" className="grid w-[72px] place-items-center"><WindowsIcon /></button>
    <button aria-label="Affichage des tâches" className="mr-1 grid w-[72px] place-items-center"><TaskViewIcon /></button>
    <div className="flex gap-0.5">
      {taskbarApps.map(app => (
        <TaskbarButton key={app.name} app={app} />
      ))}
    </div>
    <div className="ml-auto flex items-center gap-3">
      {trayIcons.map(item => (
        <button key={item.name} aria-label={item.name}>{item.icon}</button>
      ))}
      <button className="w-11">FRA</button>
      <time className="w-[100px] text-center whitespace-nowrap">
        14:27
        <br />
        05/03/2020
      </time>
      <button aria-label="Notifications" className="relative ml-3 h-[46px] w-10">
        <svg className="h-7 w-6" viewBox="0 0 24 28">
          <path d="M0 1h24v21H12l-5 6v-6H0z" fill="#fff" />
          <path d="M5 7.500h14M5 12h14M5 16.500h9" stroke="#24343b" strokeWidth="1.300" />
        </svg>
        <span className="absolute right-0.5 bottom-0 grid size-7 place-items-center rounded-full border border-[#8d9094] bg-[#33373a] text-base leading-5 font-semibold">
          10
        </span>
      </button>
      <span className="ml-1 h-full w-[7px] border-l border-[#7d878c]" />
    </div>
  </footer>
);

export default function App() {
  return (
    <div className="flex min-h-screen flex-col font-['Open_Sans',sans-serif]">
      <BrowserChrome />
      <TeamsHeader />
      <div className="flex flex-1">
        <AppRail />
        <TeamsGrid />
      </div>
      <Taskbar />
    </div>
  );
}
